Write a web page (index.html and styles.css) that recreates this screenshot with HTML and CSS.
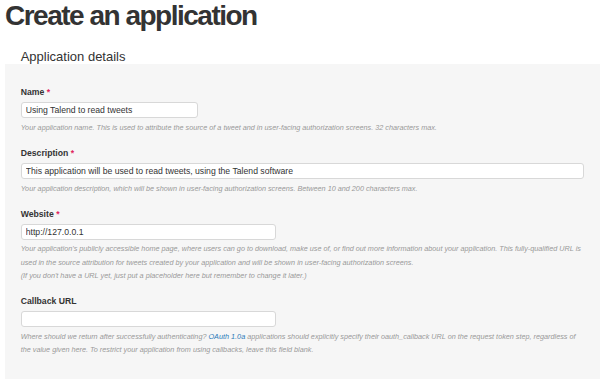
FILE: index.html
```html
<!DOCTYPE html>
<html lang="en">
<head>
    <meta charset="UTF-8">
    <meta name="viewport" content="width=device-width, initial-scale=1.0">
    <title>Create an application</title>
    <link rel="stylesheet" href="styles.css">
</head>
<body>
    <div class="page">
        <h1 class="page-title">Create an application</h1>
        <h2 class="section-title">Application details</h2>
        <form class="details-panel">
            <div class="field">
                <label class="field-label">Name <span class="required">*</span></label>
                <input type="text" class="field-input input-name" value="Using Talend to read tweets">
                <p class="field-help">Your application name. This is used to attribute the source of a tweet and in user-facing authorization screens. 32 characters max.</p>
            </div>
            <div class="field">
                <label class="field-label">Description <span class="required">*</span></label>
                <input type="text" class="field-input input-full" value="This application will be used to read tweets, using the Talend software">
                <p class="field-help">Your application description, which will be shown in user-facing authorization screens. Between 10 and 200 characters max.</p>
            </div>
            <div class="field">
                <label class="field-label">Website <span class="required">*</span></label>
                <input type="text" class="field-input input-url" value="http://127.0.0.1">
                <p class="field-help">Your application's publicly accessible home page, where users can go to download, make use of, or find out more information about your application. This fully-qualified URL is used in the source attribution for tweets created by your application and will be shown in user-facing authorization screens.<br>(If you don't have a URL yet, just put a placeholder here but remember to change it later.)</p>
            </div>
            <div class="field">
                <label class="field-label">Callback URL</label>
                <input type="text" class="field-input input-url" value="">
                <p class="field-help">Where should we return after successfully authenticating? <a href="#" class="help-link">OAuth 1.0a</a> applications should explicitly specify their oauth_callback URL on the request token step, regardless of the value given here. To restrict your application from using callbacks, leave this field blank.</p>
            </div>
        </form>
    </div>
</body>
</html>
```

FILE: styles.css
```css
body {
    font-family: 'Liberation Sans', Arial, Helvetica, sans-serif;
    margin: 0;
    padding: 0;
    background-color: #fff;
    color: #333;
}
.page {
    padding: 0 5px;
}
.page-title {
    font-size: 28px;
    line-height: 32px;
    font-weight: bold;
    letter-spacing: -1.5px;
    color: #333;
    margin: 0;
}
.section-title {
    font-size: 13px;
    line-height: 14px;
    font-weight: normal;
    color: #333;
    margin: 18px 0 0 15.7px;
}
.details-panel {
    background-color: #f6f6f6;
    margin: 0;
    padding: 22px 16px 22px 15.7px;
}
.field {
    margin-bottom: 12.8px;
}
.field:last-child {
    margin-bottom: 0;
}
.field-label {
    display: block;
    font-size: 8.67px;
    line-height: 13.33px;
    font-weight: bold;
    color: #333;
    margin-bottom: 2.7px;
}
.required {
    color: #e0245e;
}
.field-input {
    display: block;
    box-sizing: border-box;
    height: 16px;
    padding: 0 4px;
    font-family: 'Liberation Sans', Arial, sans-serif;
    font-size: 8.67px;
    color: #333;
    background: #fff;
    border: 1px solid #d8d8d8;
    border-radius: 3px;
    margin: 0;
}
.input-name {
    width: 177px;
}
.input-full {
    width: 100%;
}
.input-url {
    width: 255px;
}
.field-help {
    font-size: 7.25px;
    line-height: 13.33px;
    font-style: italic;
    color: #999;
    margin: 2.7px 0 0;
}
.help-link {
    color: #2b7bb9;
    text-decoration: none;
}
```
